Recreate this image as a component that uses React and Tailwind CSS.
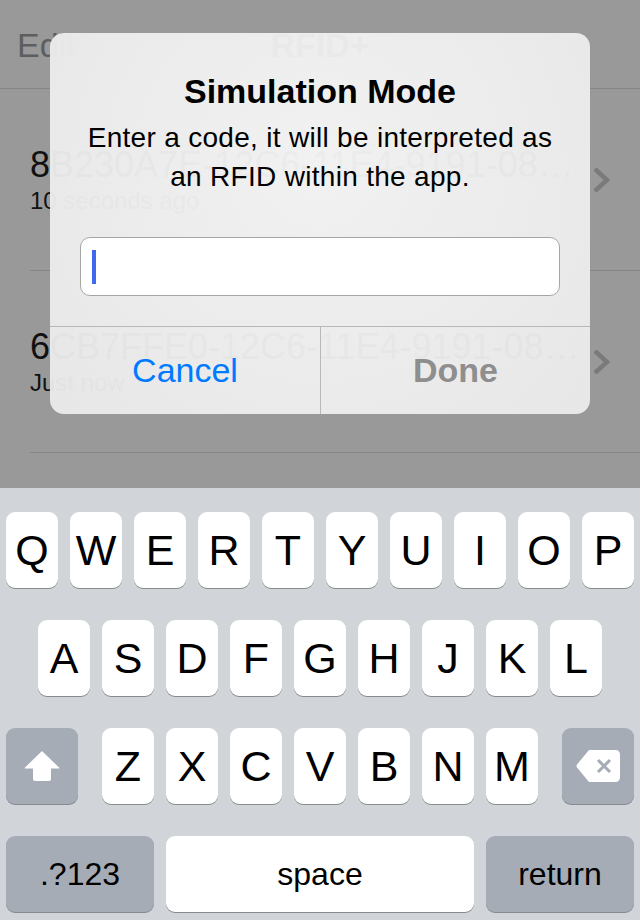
import React from 'react';

const row1 = ['Q', 'W', 'E', 'R', 'T', 'Y', 'U', 'I', 'O', 'P'];
const row2 = ['A', 'S', 'D', 'F', 'G', 'H', 'J', 'K', 'L'];
const row3 = ['Z', 'X', 'C', 'V', 'B', 'N', 'M'];

// plain white letter key
const Key = ({ label }) => (
  <div className="w-[52px] h-[76px] rounded-[9px] bg-white shadow-[0_1px_0_#888a8e] flex items-center justify-center text-[43px] leading-none text-black">
    {label}
  </div>
);

const Chevron = () => (
  <svg width="16" height="24" viewBox="0 0 16 24">
    <polyline points="2.5,2.5 13,12 2.5,21.5" fill="none" stroke="#7a7a7a" strokeWidth="4.5" strokeLinecap="square" />
  </svg>
);

const ListRow = ({ title, sub }) => (
  <div className="flex h-[182px] border-b border-[#858585]">
    <div className="flex-1 min-w-0 pt-[55px]">
      <div className="text-[36px] leading-[42px] text-[#111] truncate">{title}</div>
      <div className="text-[24px] leading-[30px] text-[#111]">{sub}</div>
    </div>
    <div className="flex items-center pl-[14px] pr-[30px]">
      <Chevron />
    </div>
  </div>
);

export default function App() {
  return (
    <div className="relative w-[640px] h-[920px] flex flex-col overflow-hidden font-['Liberation_Sans',Arial,sans-serif]">

      {/* Dimmed app behind the alert */}
      <div className="flex-1 bg-[#999999] flex flex-col">
        <div className="h-[89px] border-b border-[#858585] grid grid-cols-3 items-center">
          <div className="pl-[17px] pt-[2px] text-[34px] text-[#5e5e5e]">Edit</div>
          <div className="text-center pt-[2px] text-[34px] font-bold text-[#222]">RFID+</div>
          <div />
        </div>
        <div className="ml-[30px]">
          <ListRow title="8B230A7E-12C6-11E4-9191-0800200C9A66" sub="10 seconds ago" />
          <ListRow title="6CB7FFE0-12C6-11E4-9191-0800200C9A66" sub="Just now" />
        </div>
      </div>

      {/* Keyboard */}
      <div className="h-[432px] bg-[#d1d4d9] px-[6px] pt-[24px] pb-[8px] flex flex-col gap-[32px]">
        <div className="flex gap-[12px]">
          {row1.map((k) => <Key key={k} label={k} />)}
        </div>
        <div className="flex gap-[12px] justify-center">
          {row2.map((k) => <Key key={k} label={k} />)}
        </div>
        <div className="flex justify-between">
          <div className="w-[72px] h-[76px] rounded-[9px] bg-[#a5acb6] shadow-[0_1px_0_#888a8e] flex items-center justify-center">
            <svg width="40" height="32" viewBox="0 0 40 32">
              <path d="M20 1 L37 17.5 Q38 18.5 36.5 18.5 L29 18.5 L29 29 Q29 31 27 31 L13 31 Q11 31 11 29 L11 18.5 L3.5 18.5 Q2 18.5 3 17.5 Z" fill="#fff" />
            </svg>
          </div>
          <div className="flex gap-[12px]">
            {row3.map((k) => <Key key={k} label={k} />)}
          </div>
          <div className="w-[72px] h-[76px] rounded-[9px] bg-[#a5acb6] shadow-[0_1px_0_#888a8e] flex items-center justify-center">
            <svg width="44" height="32" viewBox="0 0 44 32">
              <path d="M13 0 L39 0 Q44 0 44 5 L44 27 Q44 32 39 32 L13 32 L1 17.5 Q0 16 1 14.5 Z" fill="#fff" />
              <path d="M22 10 L34 22 M34 10 L22 22" stroke="#a5acb6" strokeWidth="3" />
            </svg>
          </div>
        </div>
        <div className="flex gap-[12px]">
          <div className="w-[148px] h-[76px] rounded-[9px] bg-[#a5acb6] shadow-[0_1px_0_#888a8e] flex items-center justify-center text-[32px] text-black">
            .?123
          </div>
          <div className="w-[308px] h-[76px] rounded-[9px] bg-white shadow-[0_1px_0_#888a8e] flex items-center justify-center text-[32px] text-black">
            space
          </div>
          <div className="w-[148px] h-[76px] rounded-[9px] bg-[#a5acb6] shadow-[0_1px_0_#888a8e] flex items-center justify-center text-[32px] text-black">
            return
          </div>
        </div>
      </div>

      {/* Alert */}
      <div className="absolute top-[33px] left-[50px] w-[540px] rounded-[14px] overflow-hidden bg-[radial-gradient(circle_at_50%_35%,rgba(245,245,245,0.96),rgba(234,234,234,0.96))] flex flex-col">
        <div className="pt-[38px] px-[16px] text-center">
          <div className="text-[34px] leading-[40px] font-bold text-black">Simulation Mode</div>
          <div className="mt-[7px] text-[28px] leading-[39px] tracking-[0.3px] text-black">
            Enter a code, it will be interpreted as<br />an RFID within the app.
          </div>
        </div>
        <div className="mx-[30px] mt-[41px] h-[59px] rounded-[10px] border border-[#a6a6a6] bg-white flex items-center pl-[11px]">
          <div className="w-[4px] h-[34px] bg-[#4069f0]" />
        </div>
        <div className="mt-[30px] border-t border-[#b8b8b8] grid grid-cols-2 h-[88px]">
          <div className="flex items-center justify-center text-[34px] text-[#007aff]">Cancel</div>
          <div className="flex items-center justify-center border-l border-[#b8b8b8] text-[34px] font-bold text-[#8e8e8e]">Done</div>
        </div>
      </div>
    </div>
  );
}
